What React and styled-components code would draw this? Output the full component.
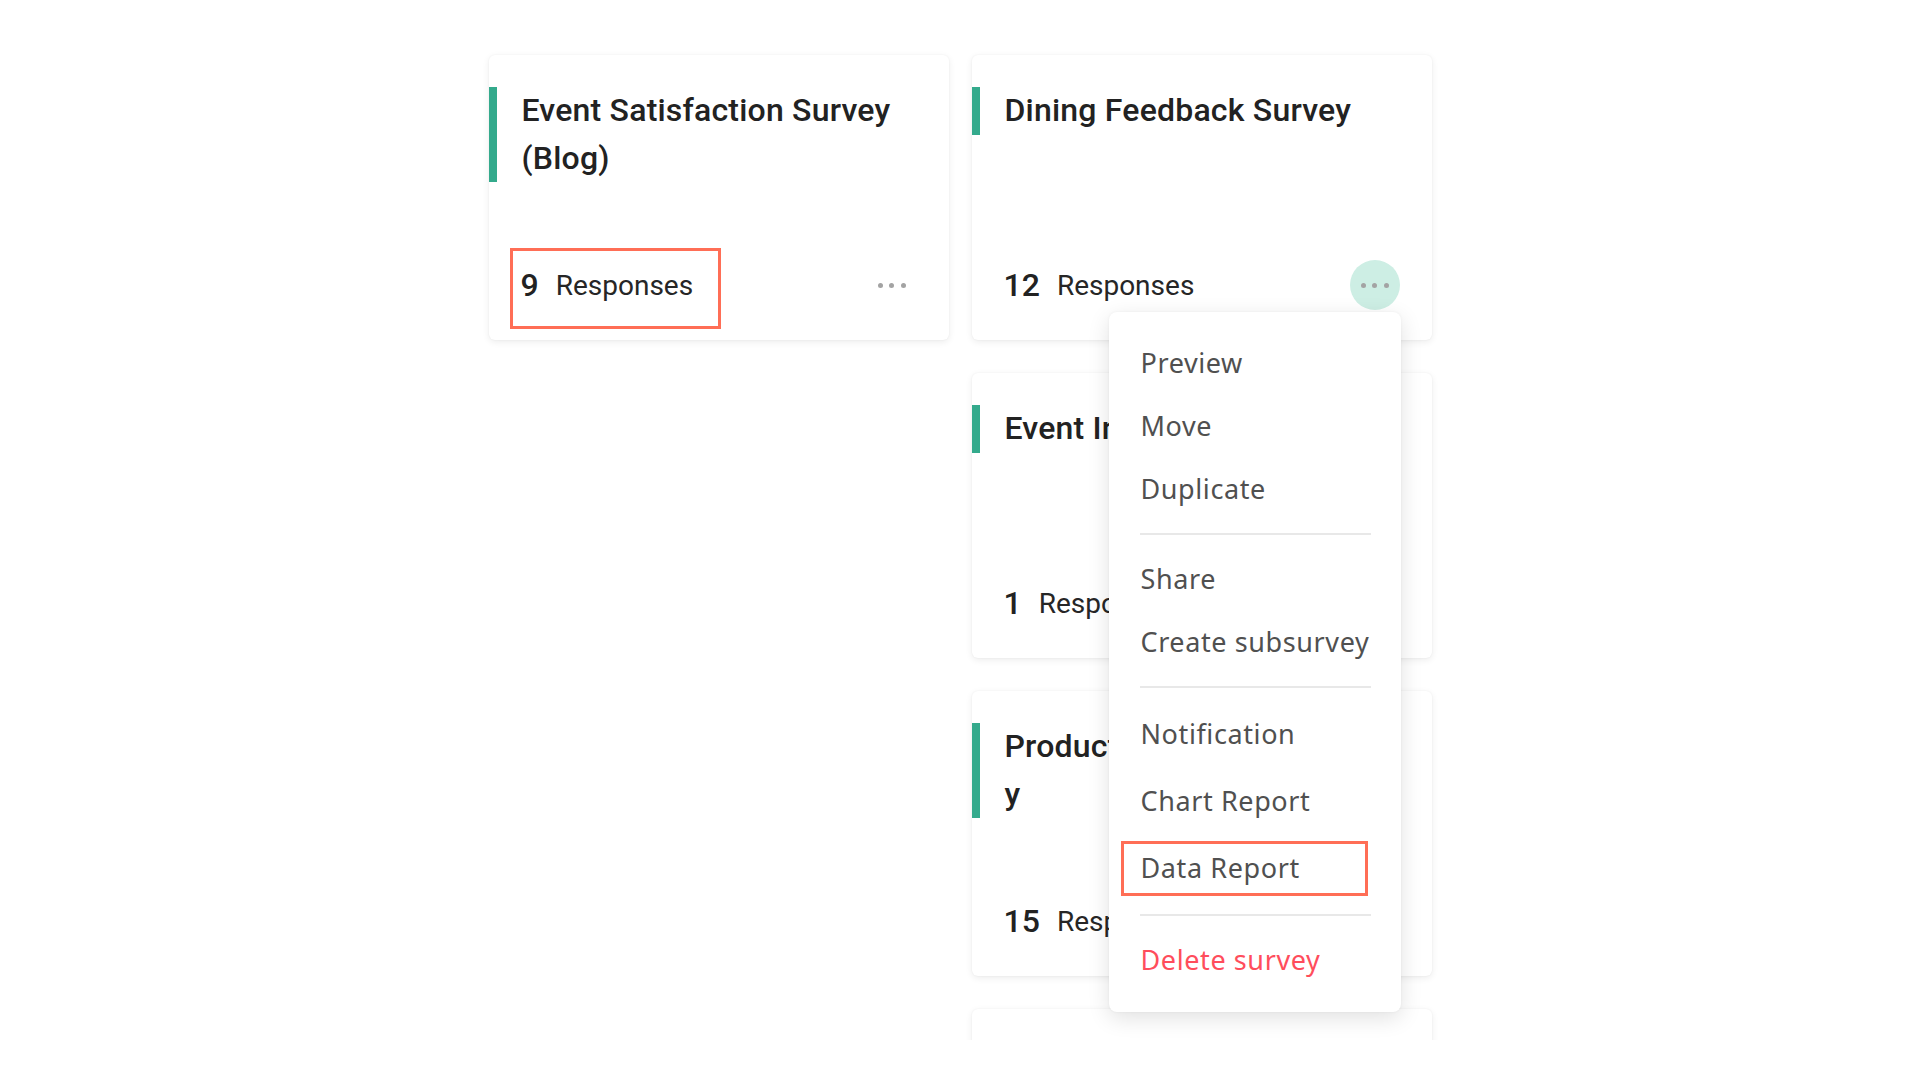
import React from "react";
import styled, { createGlobalStyle } from "styled-components";

const GlobalStyle = createGlobalStyle`
  html, body {
    margin: 0;
    padding: 0;
    background: #ffffff;
  }
  body {
    font-family: Roboto, "Noto Sans", sans-serif;
  }
`;

const Viewport = styled.div`
  height: 1040px;
  overflow: hidden;
  padding-top: 55px;
  box-sizing: border-box;
`;

const Board = styled.div`
  width: 943px;
  margin: 0 auto;
  display: flex;
  align-items: flex-start;
  gap: 23px;
`;

const Column = styled.div`
  width: 460px;
  display: flex;
  flex-direction: column;
  gap: 33px;
`;

const Card = styled.div`
  position: relative;
  z-index: ${(p) => (p.$raised ? 2 : "auto")};
  height: 285px;
  box-sizing: border-box;
  padding: 32px 0 30px;
  display: flex;
  flex-direction: column;
  background: #fff;
  border-radius: 6px;
  box-shadow: 0 2px 7px rgba(0, 0, 0, 0.08), 0 0 2px rgba(0, 0, 0, 0.05);
`;

const Title = styled.h3`
  margin: 0;
  border-left: 8px solid #34aa8c;
  padding: 0 30px 0 25px;
  font-family: Roboto, sans-serif;
  font-weight: 500;
  font-size: 32px;
  letter-spacing: 0.2px;
  line-height: 47.5px;
  color: #222;
  word-break: ${(p) => (p.$breakAll ? "break-all" : "normal")};
`;

const Footer = styled.div`
  margin-top: auto;
  height: 50px;
  padding: 0 32px;
  display: flex;
  align-items: center;
`;

const Count = styled.div`
  position: relative;
  display: flex;
  align-items: center;
  gap: 17px;

  &::after {
    content: "";
    display: ${(p) => (p.$marked ? "block" : "none")};
    position: absolute;
    top: -18px;
    bottom: -25px;
    left: -11px;
    right: -28px;
    border: 3px solid #ff6e56;
  }
`;

const Num = styled.span`
  font-family: Roboto, sans-serif;
  font-weight: 500;
  font-size: 32px;
  color: #222;
`;

const Label = styled.span`
  font-family: Roboto, sans-serif;
  font-weight: 400;
  font-size: 28px;
  color: #262626;
`;

const MoreButton = styled.button`
  margin-left: auto;
  width: 50px;
  height: 50px;
  padding: 0;
  border: none;
  border-radius: 50%;
  background: ${(p) => (p.$active ? "#cdeee4" : "transparent")};
  display: flex;
  align-items: center;
  justify-content: center;
  gap: 6.5px;
  cursor: pointer;
`;

const Dot = styled.span`
  width: 5px;
  height: 5px;
  border-radius: 50%;
  background: #a3a3a3;
`;

const Menu = styled.div`
  position: absolute;
  z-index: 10;
  top: 257px;
  right: 31px;
  width: 292px;
  box-sizing: border-box;
  padding: 19px 0 21px;
  background: #fff;
  border-radius: 8px;
  box-shadow: 0 6px 22px rgba(0, 0, 0, 0.12), 0 0 3px rgba(0, 0, 0, 0.05);
`;

const MenuItem = styled.div`
  position: relative;
  height: ${(p) => p.$h || 63}px;
  line-height: ${(p) => p.$h || 63}px;
  padding: 0 32px;
  font-family: "Noto Sans", sans-serif;
  font-size: 27px;
  letter-spacing: 0.6px;
  color: ${(p) => (p.$danger ? "#ff4d5c" : "#505050")};
  white-space: nowrap;
  cursor: pointer;

  &::after {
    content: "";
    display: ${(p) => (p.$marked ? "block" : "none")};
    position: absolute;
    top: 7px;
    bottom: 5px;
    left: 12px;
    right: 33px;
    border: 3px solid #ff6e56;
  }
`;

const Divider = styled.div`
  height: 2px;
  margin: 13px 30px 12px 31px;
  background: #e8e8e8;
`;

const SurveyCard = ({ title, count, breakAll, marked, active, raised, children }) => (
  <Card $raised={raised}>
    <Title $breakAll={breakAll}>{title}</Title>
    <Footer>
      <Count $marked={marked}>
        <Num>{count}</Num>
        <Label>Responses</Label>
      </Count>
      <MoreButton $active={active}>
        <Dot />
        <Dot />
        <Dot />
      </MoreButton>
    </Footer>
    {children}
  </Card>
);

const App = () => {
  return (
    <>
      <GlobalStyle />
      <Viewport>
        <Board>
          <Column>
            <SurveyCard title="Event Satisfaction Survey (Blog)" count={9} marked />
          </Column>
          <Column>
            <SurveyCard title="Dining Feedback Survey" count={12} active raised>
              <Menu>
                <MenuItem>Preview</MenuItem>
                <MenuItem>Move</MenuItem>
                <MenuItem>Duplicate</MenuItem>
                <Divider />
                <MenuItem>Share</MenuItem>
                <MenuItem>Create subsurvey</MenuItem>
                <Divider />
                <MenuItem $h={67}>Notification</MenuItem>
                <MenuItem $h={67}>Chart Report</MenuItem>
                <MenuItem $h={67} $marked>Data Report</MenuItem>
                <Divider />
                <MenuItem $danger>Delete survey</MenuItem>
              </Menu>
            </SurveyCard>
            <SurveyCard title="Event Invitation" count={1} />
            <SurveyCard title="Product Satisfaction Survey" count={15} breakAll />
            <SurveyCard title="Customer Survey" count={4} />
          </Column>
        </Board>
      </Viewport>
    </>
  );
};

export default App;
